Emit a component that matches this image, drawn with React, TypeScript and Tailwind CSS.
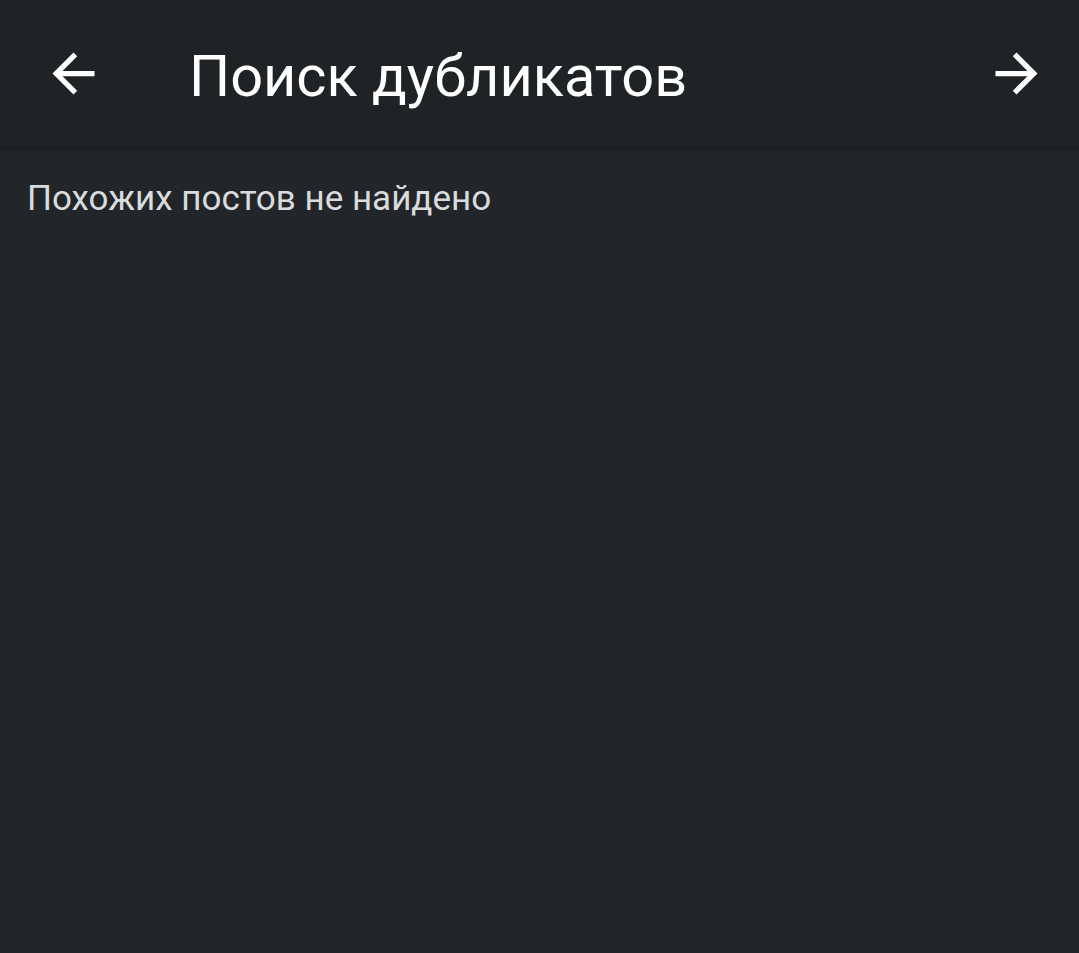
import React from 'react';

function ArrowBack({ className }: { className?: string }) {
  return (
    <svg viewBox="0 0 24 24" className={className} fill="currentColor">
      <path d="M20 11H7.83l5.59-5.59L12 4l-8 8 8 8 1.41-1.41L7.83 13H20v-2z" />
    </svg>
  );
}

function ArrowForward({ className }: { className?: string }) {
  return (
    <svg viewBox="0 0 24 24" className={className} fill="currentColor">
      <path d="M12 4l-1.41 1.41L16.17 11H4v2h12.17l-5.58 5.59L12 20l8-8z" />
    </svg>
  );
}

export default function App() {
  return (
    <div className="min-h-screen bg-[#22262a] font-['Roboto',sans-serif]">
      <header className="h-[147px] bg-[#1f2326] flex items-center pl-[42px] pr-[31px] shadow-[0_2px_6px_rgba(0,0,0,0.35)] relative">
        <button className="w-[63px] h-[63px] text-white">
          <ArrowBack className="w-[63px] h-[63px]" />
        </button>
        <h1 className="ml-[84px] mt-[7px] flex-1 text-white text-[57.7px] leading-none">Поиск дубликатов</h1>
        <button className="w-[63px] h-[63px] text-white">
          <ArrowForward className="w-[63px] h-[63px]" />
        </button>
      </header>
      <main className="px-[27px] pt-[32px]">
        <p className="text-[#d9dbdc] text-[35px] leading-[40px]">Похожих постов не найдено</p>
      </main>
    </div>
  );
}
